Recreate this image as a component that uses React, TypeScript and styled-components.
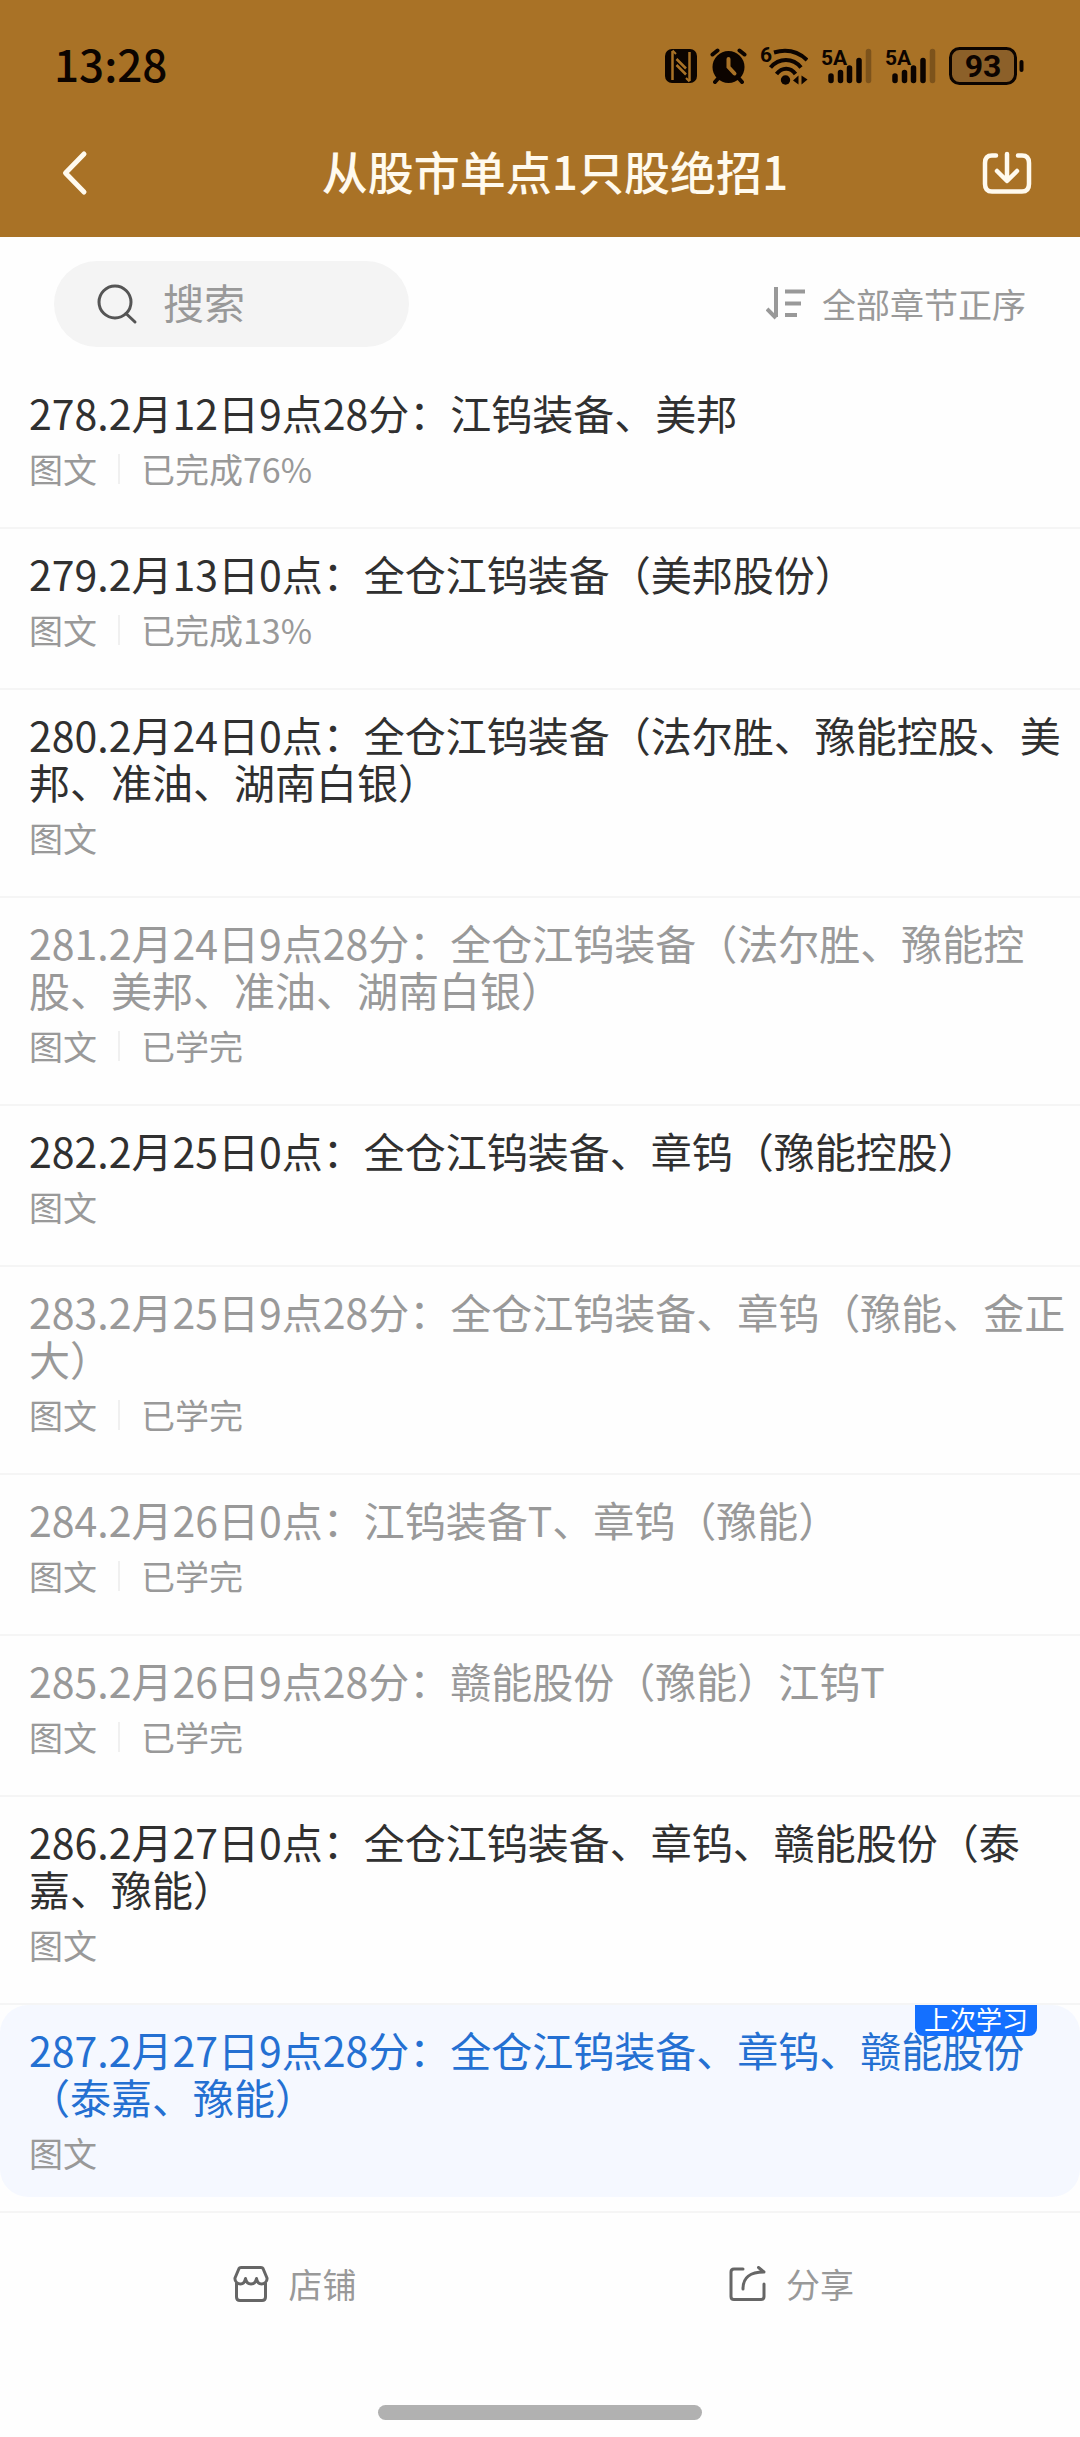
import React from 'react';
import styled, { createGlobalStyle } from 'styled-components';

const fontStack = '"Noto Sans CJK SC", "Noto Sans", sans-serif';

const GlobalStyle = createGlobalStyle`
  * {
    box-sizing: border-box;
  }

  body {
    margin: 0;
    background: #fefefe;
    font-family: ${fontStack};
    text-spacing-trim: space-all;
  }

  button,
  input {
    font: inherit;
    border: 0;
    padding: 0;
    margin: 0;
    background: none;
  }
`;

const Page = styled.div`
  min-height: 100vh;
  display: flex;
  flex-direction: column;
`;

const Header = styled.header`
  background: #a97226;
  padding-bottom: 23px;
`;

const StatusBar = styled.div`
  display: flex;
  align-items: center;
  justify-content: space-between;
  height: 132px;
  padding: 0 56px 0 54px;
  color: #0c0400;
`;

const Clock = styled.time`
  padding-bottom: 6px;
  font-size: 44px;
  line-height: 48px;
  font-weight: 500;
`;

const StatusIcons = styled.div`
  display: flex;
  align-items: center;
  gap: 13px;

  svg {
    display: block;
    font-family: Roboto, sans-serif;
    font-weight: 700;
  }
`;

const NavBar = styled.div`
  display: flex;
  align-items: center;
  height: 82px;
  padding: 0 48px 0 60px;
  color: #fffaee;
`;

const IconButton = styled.button<{ $width: number }>`
  display: flex;
  align-items: center;
  width: ${({ $width }) => $width}px;
  height: 60px;
  color: inherit;
  cursor: pointer;
`;

const PageTitle = styled.h1`
  flex: 1;
  margin: 0;
  padding-bottom: 6px;
  text-align: center;
  font-size: 46px;
  line-height: 60px;
  font-weight: 500;
`;

const Tools = styled.div`
  display: flex;
  align-items: center;
  justify-content: space-between;
  padding: 24px 54px 21px;
`;

const SearchBox = styled.label`
  display: flex;
  align-items: center;
  gap: 25px;
  width: 355px;
  height: 86px;
  padding: 0 42px;
  border-radius: 43px;
  background: #f4f4f4;
`;

const SearchInput = styled.input`
  flex: 1;
  min-width: 0;
  height: 66px;
  padding-bottom: 6px;
  font-size: 41px;
  color: #333;
  outline: none;

  &::placeholder {
    color: #999;
    opacity: 1;
  }
`;

const SortButton = styled.button`
  display: flex;
  align-items: center;
  gap: 16px;
  font-size: 34px;
  line-height: 40px;
  color: #999;
  cursor: pointer;
`;

const ChapterList = styled.ul`
  margin: 0;
  padding: 0;
  list-style: none;
`;

const ChapterItem = styled.li<{ $last?: boolean }>`
  border-bottom: 2px solid #f5f5f5;
  padding-bottom: ${({ $last }) => ($last ? 14 : 0)}px;
`;

type Tone = 'unread' | 'done' | 'current';

const toneColor: Record<Tone, string> = {
  unread: '#303030',
  done: '#999',
  current: '#2470d2',
};

const ChapterLink = styled.a<{ $tone: Tone }>`
  position: relative;
  display: block;
  padding: 21px 10px ${({ $tone }) => ($tone === 'current' ? 24 : 38)}px 29px;
  border-radius: ${({ $tone }) => ($tone === 'current' ? 28 : 0)}px;
  background: ${({ $tone }) => ($tone === 'current' ? '#f5f8ff' : 'transparent')};
  color: ${({ $tone }) => toneColor[$tone]};
  text-decoration: none;
`;

const ChapterTitle = styled.h2`
  margin: 0 0 13px;
  font-size: 41px;
  line-height: 47px;
  font-weight: 400;
`;

const Meta = styled.div`
  display: flex;
  align-items: center;
  gap: 21px;
  font-size: 34px;
  line-height: 40px;
  color: #999;
`;

const MetaDivider = styled.span`
  width: 2px;
  height: 30px;
  background: #f0f0f0;
`;

const Badge = styled.span`
  position: absolute;
  top: 0;
  right: 43px;
  padding: 0 9px 3px;
  border-radius: 0 0 8px 8px;
  background: #1470ff;
  color: #fff;
  font-size: 26px;
  line-height: 28px;
`;

const Footer = styled.footer`
  display: flex;
  flex-direction: column;
  align-items: center;
  flex: 1;
  justify-content: space-between;
  padding: 51px 0 17px;
`;

const FooterActions = styled.nav`
  display: grid;
  grid-template-columns: 1fr 1fr;
  width: 100%;
  padding: 0 40px 0 46px;
`;

const FooterButton = styled.button`
  display: flex;
  align-items: center;
  justify-content: center;
  gap: 20px;
  font-size: 34px;
  line-height: 40px;
  color: #999;
  cursor: pointer;
`;

const HomeIndicator = styled.div`
  width: 30%;
  height: 15px;
  border-radius: 8px;
  background: #b1b1b1;
`;

const NfcIcon = () => (
  <svg width="32" height="34" viewBox="0 0 32 34" aria-hidden="true">
    <rect width="32" height="34" rx="7" fill="currentColor" />
    <g stroke="#a97226" fill="none">
      <path d="M7.500 2V31M24.500 3V32" strokeWidth="2.500" />
      <path d="M7.500 1.500L11 5M21 29L24.500 32.500" strokeWidth="2" />
      <path d="M11.500 10L21 19.500M11.500 16L21 25.500" strokeWidth="2.500" />
    </g>
  </svg>
);

const AlarmIcon = () => (
  <svg width="37" height="36" viewBox="0 0 37 36" fill="none" stroke="currentColor" strokeLinecap="round" aria-hidden="true">
    <circle cx="18.500" cy="19" r="16" fill="currentColor" stroke="none" />
    <path d="M2.500 6.500L7.500 2.500M34.500 6.500L29.500 2.500M5 34L9 29.500M32 34L28 29.500" strokeWidth="4" />
    <path d="M18.500 11V19L24.500 25.500" stroke="#a97226" strokeWidth="4" />
  </svg>
);

const WifiIcon = () => (
  <svg width="48" height="52" viewBox="0 -6 48 52" fill="none" aria-hidden="true">
    <text x="0" y="16" fontSize="21" fill="currentColor">6</text>
    <g stroke="currentColor" strokeWidth="4">
      <path d="M14 6.500C26 3 38 5.500 47 14" />
      <path d="M10.500 21.500C19 11.500 33 11.500 41 21.500" />
      <path d="M16.500 28C22 21 30.500 21 35.500 28" />
    </g>
    <circle cx="25.500" cy="34" r="4.700" fill="currentColor" />
    <path d="M38.500 29.500V38.500L33 34.500ZM41.500 29.500V38.500L47.500 33.500Z" fill="currentColor" />
  </svg>
);

const SignalIcon = () => (
  <svg width="51" height="48" viewBox="0 -6 51 48" fill="none" aria-hidden="true">
    <text x="0" y="17" fontSize="21" fill="currentColor">5A</text>
    <g stroke="currentColor" strokeWidth="5.500" strokeLinecap="round">
      <path d="M10 28V32.500M19.500 24.500V32.500M28.500 20V32.500M38 12.500V32.500" />
      <path d="M47.500 3.500V32.500" opacity=".28" />
    </g>
  </svg>
);

const BatteryIcon = () => (
  <svg width="75" height="38" viewBox="0 0 75 38" fill="none" aria-hidden="true">
    <rect x="1.500" y="1.500" width="65" height="35" rx="9" fill="#8c6029" stroke="currentColor" strokeWidth="3" />
    <path d="M72.500 15V23" stroke="currentColor" strokeWidth="4" strokeLinecap="round" />
    <text x="34" y="30" fontSize="32" textAnchor="middle" fill="currentColor">93</text>
  </svg>
);

const BackIcon = () => (
  <svg width="30" height="46" viewBox="0 0 30 46" fill="none" stroke="currentColor" strokeWidth="5" strokeLinecap="round" strokeLinejoin="round" aria-hidden="true">
    <path d="M24 4L5.500 23L24 42" />
  </svg>
);

const DownloadIcon = () => (
  <svg width="50" height="44" viewBox="0 0 50 44" fill="none" stroke="currentColor" strokeWidth="4.500" strokeLinecap="round" strokeLinejoin="round" aria-hidden="true">
    <path d="M14 4.500H10Q3 4.500 3 12V33Q3 40.500 10 40.500H40Q47 40.500 47 33V12Q47 4.500 40 4.500H36" />
    <path d="M25 3V29M15 20L25 30L35 20" />
  </svg>
);

const SearchIcon = () => (
  <svg width="42" height="42" viewBox="0 0 42 42" fill="none" stroke="#555" strokeWidth="3" strokeLinecap="round" aria-hidden="true">
    <circle cx="19" cy="19" r="16" />
    <path d="M30 30.500L39 39" />
  </svg>
);

const SortIcon = () => (
  <svg width="40" height="34" viewBox="0 0 40 34" fill="none" stroke="currentColor" strokeWidth="4" aria-hidden="true">
    <path d="M10 0V30M1 22L10 31" />
    <path d="M19 4.500H39M19 16.500H35M19 28H31" />
  </svg>
);

const ShopIcon = () => (
  <svg width="36" height="36" viewBox="0 0 36 36" fill="none" stroke="#666" strokeWidth="3" strokeLinejoin="round" aria-hidden="true">
    <path d="M6 2.500Q6.500 1.500 8 1.500H28Q29.500 1.500 30 2.500L34 12C34.500 16 31 18 28.500 18Q24.500 18 23.500 12.500Q22.500 18 18 18Q13.500 18 12.500 12.500Q11.500 18 7.500 18C5 18 1.500 16 2 12Z" />
    <path d="M3.500 17V31Q3.500 34.500 7 34.500H29Q32.500 34.500 32.500 31V17" />
  </svg>
);

const ShareIcon = () => (
  <svg width="37" height="36" viewBox="0 0 37 36" fill="none" stroke="#666" strokeWidth="3" strokeLinecap="round" strokeLinejoin="round" aria-hidden="true">
    <path d="M14 3H5Q2 3 2 6V30.500Q2 33.500 5 33.500H32Q35 33.500 35 30.500V18" />
    <path d="M14 23C14 11 21 6 35 6L29.500 1.500" />
  </svg>
);

interface Chapter {
  title: string;
  tone: Tone;
  progress?: string;
  badge?: string;
}

const chapters: Chapter[] = [
  { title: '278.2月12日9点28分：江钨装备、美邦', tone: 'unread', progress: '已完成76%' },
  { title: '279.2月13日0点：全仓江钨装备（美邦股份）', tone: 'unread', progress: '已完成13%' },
  { title: '280.2月24日0点：全仓江钨装备（法尔胜、豫能控股、美邦、准油、湖南白银）', tone: 'unread' },
  { title: '281.2月24日9点28分：全仓江钨装备（法尔胜、豫能控股、美邦、准油、湖南白银）', tone: 'done', progress: '已学完' },
  { title: '282.2月25日0点：全仓江钨装备、章钨（豫能控股）', tone: 'unread' },
  { title: '283.2月25日9点28分：全仓江钨装备、章钨（豫能、金正大）', tone: 'done', progress: '已学完' },
  { title: '284.2月26日0点：江钨装备T、章钨（豫能）', tone: 'done', progress: '已学完' },
  { title: '285.2月26日9点28分：赣能股份（豫能）江钨T', tone: 'done', progress: '已学完' },
  { title: '286.2月27日0点：全仓江钨装备、章钨、赣能股份（泰嘉、豫能）', tone: 'unread' },
  { title: '287.2月27日9点28分：全仓江钨装备、章钨、赣能股份（泰嘉、豫能）', tone: 'current', badge: '上次学习' },
];

export default function App() {
  return (
    <Page lang="zh-CN">
      <GlobalStyle />
      <Header>
        <StatusBar>
          <Clock>13:28</Clock>
          <StatusIcons>
            <NfcIcon />
            <AlarmIcon />
            <WifiIcon />
            <SignalIcon />
            <SignalIcon />
            <BatteryIcon />
          </StatusIcons>
        </StatusBar>
        <NavBar>
          <IconButton type="button" $width={68} aria-label="返回">
            <BackIcon />
          </IconButton>
          <PageTitle>从股市单点1只股绝招1</PageTitle>
          <IconButton type="button" $width={50} aria-label="下载">
            <DownloadIcon />
          </IconButton>
        </NavBar>
      </Header>
      <main>
        <Tools>
          <SearchBox>
            <SearchIcon />
            <SearchInput type="text" placeholder="搜索" aria-label="搜索" />
          </SearchBox>
          <SortButton type="button">
            <SortIcon />
            全部章节正序
          </SortButton>
        </Tools>
        <ChapterList>
          {chapters.map(({ title, tone, progress, badge }, index) => (
            <ChapterItem key={title} $last={index === chapters.length - 1}>
              <ChapterLink href="#" $tone={tone}>
                <ChapterTitle>{title}</ChapterTitle>
                <Meta>
                  <span>图文</span>
                  {progress && <MetaDivider />}
                  {progress && <span>{progress}</span>}
                </Meta>
                {badge && <Badge>{badge}</Badge>}
              </ChapterLink>
            </ChapterItem>
          ))}
        </ChapterList>
      </main>
      <Footer>
        <FooterActions>
          <FooterButton type="button">
            <ShopIcon />
            店铺
          </FooterButton>
          <FooterButton type="button">
            <ShareIcon />
            分享
          </FooterButton>
        </FooterActions>
        <HomeIndicator />
      </Footer>
    </Page>
  );
}
